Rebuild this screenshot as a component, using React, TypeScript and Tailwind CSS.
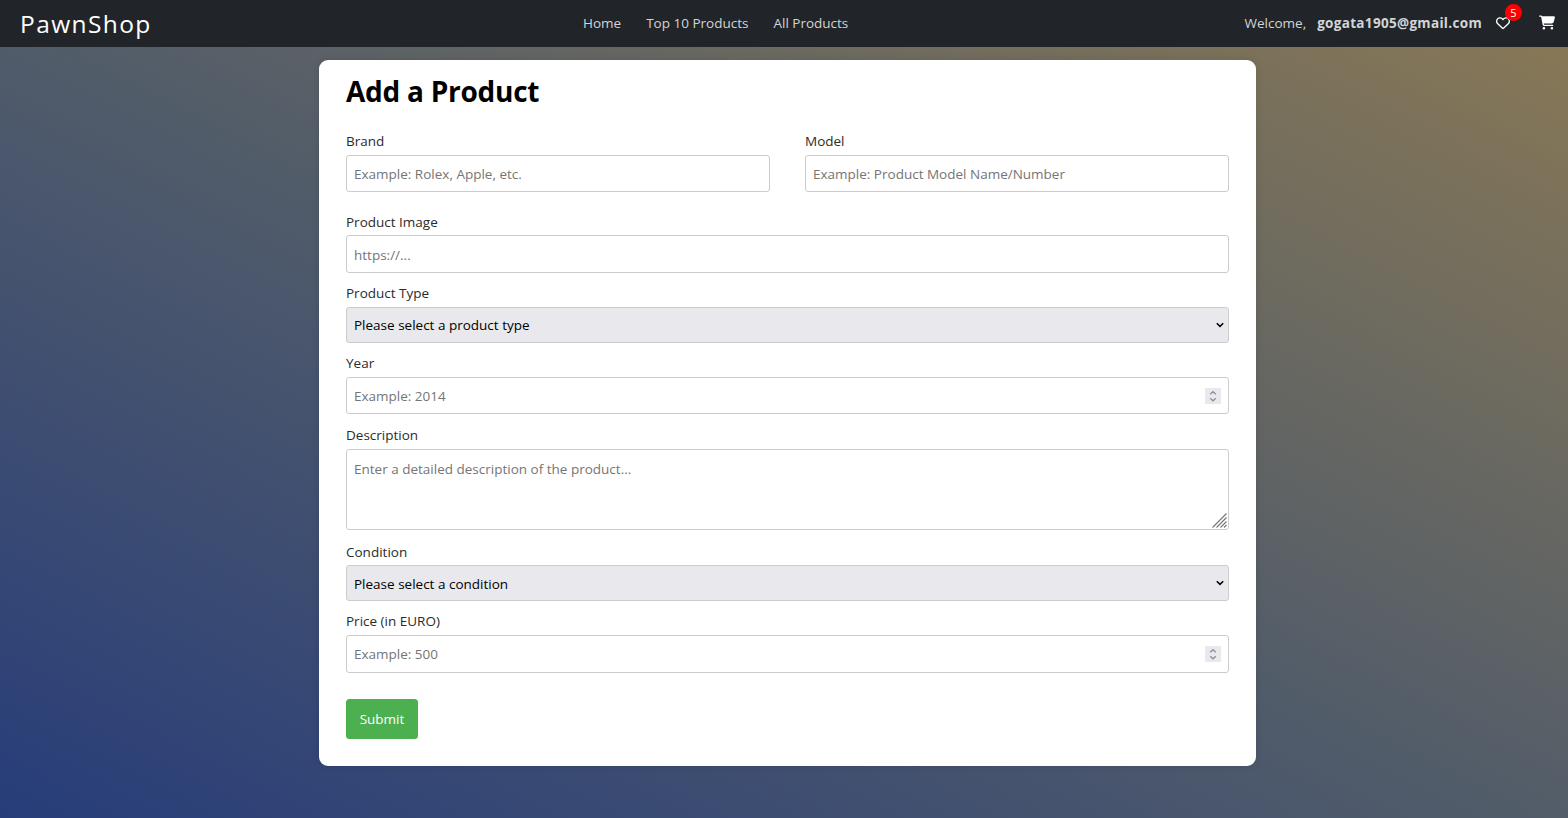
import type { ReactNode } from "react";
import { FaCartShopping, FaRegHeart } from "react-icons/fa6";

const box = "w-full rounded-[3px] border border-[#ccc] px-[7px] flex items-center";

function Label({ children }: { children: ReactNode }) {
  return <div className="h-5 text-[13.5px] leading-5 text-[#2b2b2b]">{children}</div>;
}

function Field({ label, value, className }: { label: string; value: string; className: string }) {
  return (
    <div className="flex-1">
      <Label>{label}</Label>
      <div className={`${box} bg-white pt-[2px] text-[#757575] ${className}`}>{value}</div>
    </div>
  );
}

function Spinner() {
  return (
    <svg className="ml-auto h-4 w-4 bg-[#e9e9ed]" viewBox="0 0 16 16" fill="none" stroke="#8f8f9d" strokeWidth="1.4">
      <path d="M5.2 6.2 8 3.7l2.8 2.5M5.2 10.2 8 12.7l2.8-2.5" />
    </svg>
  );
}

function NumberField({ label, value, className, textClass }: { label: string; value: string; className: string; textClass: string }) {
  return (
    <div>
      <Label>{label}</Label>
      <div className={`${box} bg-white text-[#757575] ${className}`}>
        <span className={textClass}>{value}</span>
        <Spinner />
      </div>
    </div>
  );
}

function SelectField({ label, value, className, textClass }: { label: string; value: string; className: string; textClass: string }) {
  return (
    <div>
      <Label>{label}</Label>
      <div className={`${box} h-9 bg-[#e9e9ed] pr-[3px] text-black ${className}`}>
        <span className={textClass}>{value}</span>
        <svg className="ml-auto h-[10px] w-[10px]" viewBox="0 0 10 10" fill="none" stroke="#000" strokeWidth="1.5">
          <path d="M1.8 3.3 5 6.4l3.2-3.1" />
        </svg>
      </div>
    </div>
  );
}

export default function App() {
  return (
    <div className="h-[818px] overflow-hidden bg-[linear-gradient(to_right_top,#273d7a,#535d69,#8a7955)] font-['Open_Sans',sans-serif] text-[13.5px]">
      <header className="grid h-[47px] grid-cols-[583px_1fr_auto] items-center bg-[#212529] text-[#d3d4d5]">
        <div className="pl-5 text-[24.5px] leading-8 tracking-[1.4px] text-white">PawnShop</div>
        <nav className="flex gap-[25px]">
          <span>Home</span>
          <span>Top 10 Products</span>
          <span>All Products</span>
        </nav>
        <div className="flex items-center pr-[13px]">
          <span>Welcome,</span>
          <b className="ml-[11px] font-bold tracking-[0.32px]">gogata1905@gmail.com</b>
          <div className="relative -top-px ml-[14px]">
            <FaRegHeart className="h-[14px] w-[14px] text-white" />
            <span className="absolute -top-[12px] left-[9px] flex h-[17px] w-[17px] items-center justify-center rounded-full bg-[red] text-[11px] leading-none text-white">5</span>
          </div>
          <FaCartShopping className="relative -top-px ml-[29px] h-[15px] w-4 text-white" />
        </div>
      </header>
      <main className="mt-[13px] ml-[319px] h-[706px] w-[937px] rounded-[9px] bg-white px-[27px] pt-[13px] shadow-[0_0_9px_rgba(0,0,0,0.1)]">
        <h1 className="h-9 text-[28px] leading-9 font-bold tracking-[-0.25px] text-black">Add a Product</h1>
        <div className="mt-[22px] flex gap-[35px]">
          <Field label="Brand" value="Example: Rolex, Apple, etc." className="mt-1 h-[37px]" />
          <Field label="Model" value="Example: Product Model Name/Number" className="mt-1 h-[37px]" />
        </div>
        <div className="mt-5">
          <Field label="Product Image" value="https://..." className="mt-[3px] h-[38px]" />
        </div>
        <div className="mt-[10px]">
          <SelectField label="Product Type" value="Please select a product type" className="mt-1" textClass="" />
        </div>
        <div className="mt-[10px]">
          <NumberField label="Year" value="Example: 2014" className="mt-1 h-[37px]" textClass="pt-[2px]" />
        </div>
        <div className="mt-[11px]">
          <Label>Description</Label>
          <div className={`${box} relative mt-1 h-[81px] items-start! bg-white pt-[9px] text-[#757575]`}>
            Enter a detailed description of the product...
            <svg className="absolute right-px bottom-px h-[15px] w-[15px]" viewBox="0 0 15 15" stroke="#777" strokeWidth="1.2">
              <path d="M.5 14.5l14-14M4.5 14.5l10-10M8.5 14.5l6-6M12 14.5l2.5-2.5" />
            </svg>
          </div>
        </div>
        <div className="mt-3">
          <SelectField label="Condition" value="Please select a condition" className="mt-[3px]" textClass="pt-[2px]" />
        </div>
        <div className="mt-[10px]">
          <NumberField label="Price (in EURO)" value="Example: 500" className="mt-1 h-[38px]" textClass="" />
        </div>
        <button className="mt-[26px] block h-10 w-[72px] rounded-[3.5px] bg-[#4caf50] text-white">Submit</button>
      </main>
    </div>
  );
}
